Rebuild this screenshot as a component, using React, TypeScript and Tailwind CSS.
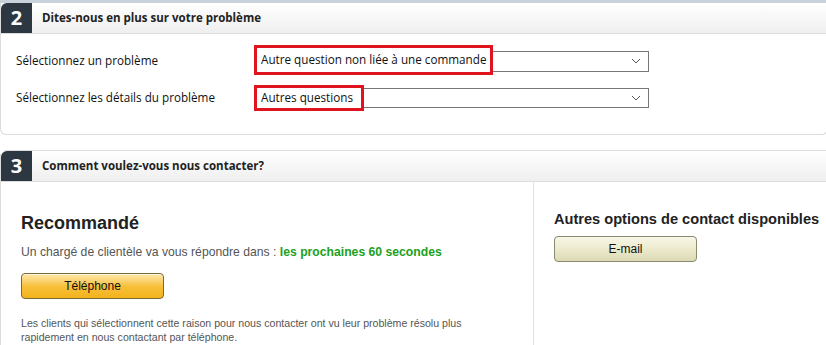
import React from "react";

function Chevron() {
  return (
    <svg width="10" height="6" viewBox="0 0 10 6" className="mr-[7px]">
      <path d="M1 1 L5 5 L9 1" fill="none" stroke="#555" strokeWidth="1" />
    </svg>
  );
}

function Header({ n, title }: { n: string; title: string }) {
  return (
    <div className="flex h-[31px] border-b border-[#dcdcdc] bg-gradient-to-b from-white to-[#efefef]">
      <div className="w-[31px] rounded-tl-[6px] bg-[#2d3742] text-white text-[20px] font-bold flex items-center justify-center font-['Open_Sans',sans-serif]">
        {n}
      </div>
      <div className="pl-[10px] flex items-center text-[11.5px] font-bold text-[#222] font-['Open_Sans',sans-serif]">
        {title}
      </div>
    </div>
  );
}

export default function App() {
  return (
    <div className="w-[826px] h-[345px] overflow-hidden bg-white">
      <div className="h-[3px] bg-[#c9d1db]" />
      <div className="border-l border-r border-b border-[#dcdcdc] rounded-bl-[6px] rounded-br-[6px] mr-[-2px]">
        <Header n="2" title="Dites-nous en plus sur votre problème" />
        <div className="pt-[12px] pb-[21px] font-['Open_Sans',sans-serif] text-[11.7px] text-[#111]">
          <div className="flex items-center h-[30px]">
            <div className="w-[253px] pl-[15px]">Sélectionnez un problème</div>
            <div className="relative w-[395px] h-[21px] border border-[#777] flex items-center justify-end">
              <Chevron />
              <div className="absolute left-[-1px] top-[-7px] h-[30px] w-[239px] border-[3px] border-[#e0141e] bg-white flex items-center pl-[4px] whitespace-nowrap">
                Autre question non liée à une commande
              </div>
            </div>
          </div>
          <div className="flex items-center h-[30px] mt-[7px]">
            <div className="w-[253px] pl-[15px]">Sélectionnez les détails du problème</div>
            <div className="relative w-[395px] h-[20px] border border-[#777] flex items-center justify-end">
              <Chevron />
              <div className="absolute left-[-1px] top-[-4px] h-[26px] w-[110px] border-[3px] border-[#e0141e] bg-white flex items-center pl-[4px] whitespace-nowrap">
                Autres questions
              </div>
            </div>
          </div>
        </div>
      </div>
      <div className="h-[15px]" />
      <div className="border-l border-r border-t border-[#dcdcdc] rounded-tl-[6px] mr-[-2px]">
        <Header n="3" title="Comment voulez-vous nous contacter?" />
        <div className="flex font-['Liberation_Sans',Arial,sans-serif]">
          <div className="w-[533px] border-r border-[#e2e2e2] pl-[20px] pt-[30px] h-[200px]">
            <div className="text-[18px] font-bold text-[#222] leading-[22px]">Recommandé</div>
            <div className="mt-[10px] text-[12.2px] text-[#555] leading-[16px] whitespace-nowrap">
              Un chargé de clientèle va vous répondre dans :{" "}
              <span className="font-bold text-[#20a020]">les prochaines 60 secondes</span>
            </div>
            <button className="mt-[13px] w-[143px] h-[26px] rounded-[4px] border border-[#7a6a3a] bg-gradient-to-b from-[#fde9a7] via-[#f7c13a] to-[#f2b21a] text-[12px] text-[#111] shadow-[inset_0_1px_0_rgba(255,255,255,0.6)]">
              Téléphone
            </button>
            <div className="mt-[17px] text-[10.6px] text-[#555] leading-[14px] w-[470px]">
              Les clients qui sélectionnent cette raison pour nous contacter ont vu leur problème résolu plus rapidement en nous contactant par téléphone.
            </div>
          </div>
          <div className="pl-[20px] pt-[29px]">
            <div className="text-[14.6px] font-bold text-[#222] leading-[16px] whitespace-nowrap">Autres options de contact disponibles</div>
            <button className="mt-[9px] w-[143px] h-[26px] rounded-[4px] border border-[#8a8a70] bg-gradient-to-b from-[#f8f7e8] via-[#eceacd] to-[#dcdab4] text-[12px] text-[#111]">
              E-mail
            </button>
          </div>
        </div>
      </div>
    </div>
  );
}
